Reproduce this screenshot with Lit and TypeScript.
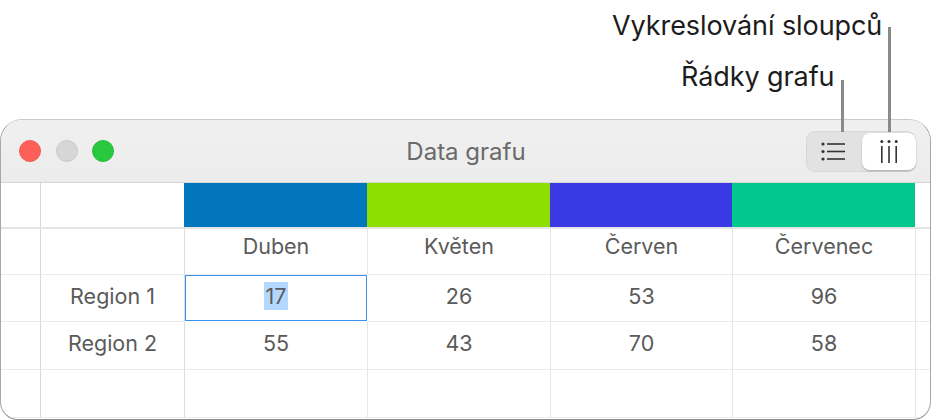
import { LitElement, html, css } from "lit";
import { customElement } from "lit/decorators.js";

@customElement("app-root")
export class AppRoot extends LitElement {
  static styles = css`
    :host { display: block; position: relative; width: 931px; height: 420px; overflow: hidden; background: #fff; font-family: Inter, "Noto Sans", sans-serif; }
    .label { position: absolute; color: #1c1c1c; font-size: 27px; line-height: 30px; white-space: nowrap; letter-spacing: -0.08px; }
    .l1 { left: 612px; top: 11px; }
    .l2 { left: 681px; top: 62px; }
    .lead { position: absolute; width: 3px; background: #8a8a8a; z-index: 3; }
    .ld1 { left: 888px; top: 27px; height: 105px; }
    .ld2 { left: 841px; top: 80px; height: 52px; }
    .top { height: 119px; }
    .win { box-sizing: border-box; width: 931px; height: 301px; border: 1px solid #c9c9c9; border-bottom-color: #8f8f8f; border-left-color: #a8a8a8; border-right-color: #a8a8a8; border-radius: 22px 22px 18px 18px; overflow: hidden; background: #fff; }
    .bar { box-sizing: border-box; height: 63px; display: grid; grid-template-columns: 1fr auto 1fr; align-items: center; padding: 0 14px 0 18px; background: linear-gradient(#f0f0f0, #ececec); border-bottom: 1px solid #d6d6d6; }
    .lights { display: flex; gap: 14.5px; }
    .light { width: 22px; height: 22px; border-radius: 50%; box-sizing: border-box; }
    .r { background: #fe5f57; border: 1px solid #ee5b55; }
    .g { background: #d6d6d6; border: 1px solid #c8c8c8; }
    .v { background: #28c83f; border: 1px solid #24bc3a; }
    .title { font-size: 24px; color: #6a6a6a; padding-top: 1px; margin-left: -3px; }
    .seg { justify-self: end; display: flex; width: 110px; height: 41px; box-sizing: border-box; background: #e2e2e2; border: 1px solid #d7d7d7; border-radius: 9px; }
    .seg-item { flex: 1; display: flex; align-items: center; justify-content: center; }
    .seg-item.list { padding-right: 4px; }
    .seg-item.on { background: #fff; border-radius: 8px; margin: 1px -1px 1px 0; box-shadow: 0 1px 2px rgba(0,0,0,.25); flex: 0 0 54px; padding-right: 1px; box-sizing: border-box; }
    .grid { display: grid; grid-template-columns: 40px 144px 183px 183px 182px 183px 1fr; grid-template-rows: 46px 46px 47px 48px 48px; font-size: 21.5px; color: #5a5a5a; }
    .c { box-sizing: border-box; display: flex; align-items: center; justify-content: center; border-right: 1px solid #e6e6e6; border-bottom: 1px solid #ebebeb; padding-bottom: 6px; }
    .c.rowhead { border-right-color: #dcdcdc; }
    .c.hd { border-bottom: 2px solid #e4e4e4; }
    .c.gutter { border-right: 1px solid #d9d9d9; }
    .c.month { padding-bottom: 12px; }
    .c.r1 { padding-bottom: 4px; }
    .c.last { border-right: 0; }
    .swatch-wrap { border-right: 0; padding: 0; align-items: stretch; justify-content: stretch; }
    .swatch { flex: 1; margin-left: -1px; margin-right: 1px; }
    .sel { box-shadow: inset 0 0 0 1px #3d8ff0; border-color: transparent; }
    .hl { background: #b3d7ff; padding: 2px 1.5px; line-height: 24px; }
  `;

  private cell(text: string, cls = "") {
    return html`<div class="c ${cls}">${text}</div>`;
  }

  render() {
    const swatches = ["#0176bd", "#8edf00", "#3a3ae4", "#00c88e"];
    const months = ["Duben", "Květen", "Červen", "Červenec"];
    const r1 = ["26", "53", "96"];
    const r2 = ["55", "43", "70", "58"];
    return html`
      <div class="top"></div>
      <div class="label l1">Vykreslování sloupců</div>
      <div class="label l2">Řádky grafu</div>
      <div class="lead ld1"></div>
      <div class="lead ld2"></div>
      <div class="win">
        <div class="bar">
          <div class="lights"><div class="light r"></div><div class="light g"></div><div class="light v"></div></div>
          <div class="title">Data grafu</div>
          <div class="seg">
            <div class="seg-item list">
              <svg width="24" height="19" viewBox="0 0 24 19"><g fill="#333"><circle cx="2" cy="2" r="1.6"/><circle cx="2" cy="9.5" r="1.6"/><circle cx="2" cy="17" r="1.6"/><rect x="6" y="1.2" width="18" height="1.6"/><rect x="6" y="8.7" width="18" height="1.6"/><rect x="6" y="16.2" width="18" height="1.6"/></g></svg>
            </div>
            <div class="seg-item on">
              <svg width="18" height="23" viewBox="0 0 18 23"><g fill="#333"><circle cx="1.8" cy="1.6" r="1.5"/><circle cx="9" cy="1.6" r="1.5"/><circle cx="16.2" cy="1.6" r="1.5"/><rect x="1" y="6" width="1.6" height="17"/><rect x="8.2" y="6" width="1.6" height="17"/><rect x="15.4" y="6" width="1.6" height="17"/></g></svg>
            </div>
          </div>
        </div>
        <div class="grid">
          <div class="c gutter hd"></div><div class="c rowhead hd"></div>
          ${swatches.map((s) => html`<div class="c hd swatch-wrap"><div class="swatch" style="background:${s}"></div></div>`)}
          <div class="c hd last"></div>

          <div class="c gutter"></div><div class="c rowhead"></div>
          ${months.map((m) => this.cell(m, "month"))}
          <div class="c last"></div>

          <div class="c gutter"></div>${this.cell("Region 1", "rowhead r1")}
          <div class="c sel r1"><span class="hl">17</span></div>
          ${r1.map((v) => this.cell(v, "r1"))}
          <div class="c last"></div>

          <div class="c gutter"></div>${this.cell("Region 2", "rowhead")}
          ${r2.map((v) => this.cell(v))}
          <div class="c last"></div>

          <div class="c gutter"></div><div class="c rowhead"></div>
          ${[0, 1, 2, 3].map(() => this.cell(""))}
          <div class="c last"></div>
        </div>
      </div>
    `;
  }
}
